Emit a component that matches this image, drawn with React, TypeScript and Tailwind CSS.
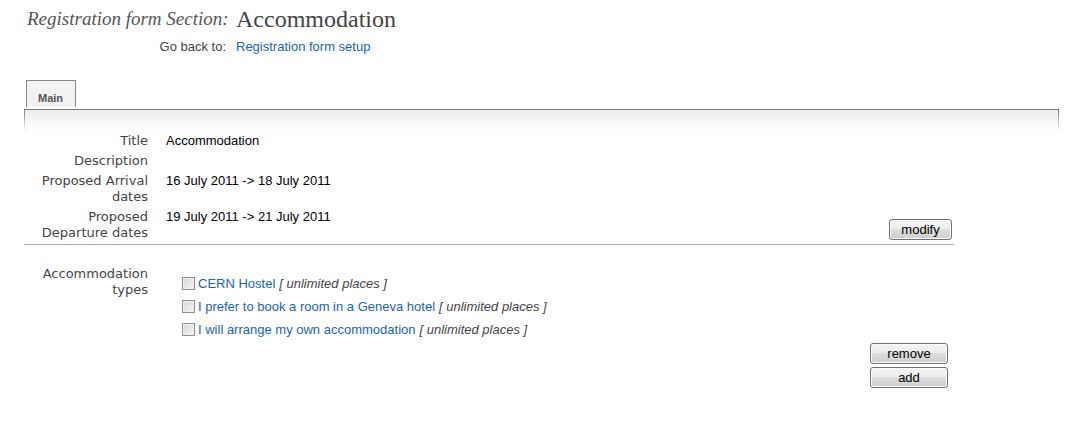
import React from "react";

const label = "w-[124px] shrink-0 pl-3 text-right font-['DejaVu_Sans',Verdana,sans-serif] text-[13px] leading-4 text-[#444]";
const value = "ml-[18px] flex-1 text-[13px] leading-4 text-black";
const btn =
    "h-[21px] rounded-[3px] border border-[#707070] bg-[linear-gradient(to_bottom,#f4f4f4_0%,#ebebeb_50%,#dddddd_50%,#cfcfcf_100%)] text-[13px] leading-[19px] text-black shadow-[inset_0_0_0_1px_#fcfcfc]";

const types = [
    "CERN Hostel",
    "I prefer to book a room in a Geneva hotel",
    "I will arrange my own accommodation",
];

function Row({ name, children, extra }: { name: React.ReactNode; children?: React.ReactNode; extra?: React.ReactNode }) {
    return (
        <div className="flex py-[2px]">
            <div className={label}>{name}</div>
            <div className={value}>{children}</div>
            {extra}
        </div>
    );
}

export default function App() {
    return (
        <div className="min-h-[421px] w-[1070px] bg-white font-['Liberation_Sans',Arial,sans-serif]">
            {/* Header */}
            <div className="grid grid-cols-[199px_auto] gap-x-[10px] gap-y-[6px] pl-[27px] pt-[5px]">
                <div className="whitespace-nowrap text-right font-['Liberation_Serif',Georgia,serif] text-[19px] italic leading-7 text-[#555]">
                    Registration form Section:
                </div>
                <div className="font-['Liberation_Serif',Georgia,serif] text-[24px] leading-7 text-[#444]">Accommodation</div>
                <div className="text-right text-[13px] leading-4 text-[#444]">Go back to:</div>
                <div className="text-[13px] leading-4">
                    <a className="text-[#1a64b0]">Registration form setup</a>
                </div>
            </div>

            {/* Tabs */}
            <div className="mt-[25px] pl-[24px]">
                <div className="relative z-10 -mb-px ml-[2px] inline-block border border-b-0 border-[#888] bg-[#f2f2f2] pb-[2px] pl-[11px] pr-[12px] pt-[11px] text-[11px] font-bold leading-[13px] text-[#555]">
                    Main
                </div>
                <div className="h-[22px] w-[1035px] bg-gradient-to-b from-[#777] to-white px-px pt-px">
                    <div className="h-full bg-gradient-to-b from-[#ececec] to-white" />
                </div>

                <div className="w-[930px]">
                    <div className="border-b border-[#aaa] pb-px">
                        <Row name="Title">Accommodation</Row>
                        <Row name="Description" />
                        <Row name={<>Proposed Arrival<br />dates</>}>16 July 2011 -&gt; 18 July 2011</Row>
                        <Row
                            name={<>Proposed<br />Departure dates</>}
                            extra={<button className={`${btn} mb-[1px] mr-[2px] w-[63px] self-end`}>modify</button>}
                        >
                            19 July 2011 -&gt; 21 July 2011
                        </Row>
                    </div>

                    <div className="mt-[19px] flex py-[2px]">
                        <div className={label}>
                            Accommodation
                            <br />
                            types
                        </div>
                        <div className="ml-[18px] flex-1 pl-4 pt-[6px]">
                            {types.map(t => (
                                <div key={t} className="flex h-[23px] items-center text-[13px]">
                                    <span className="mr-[3px] h-[13px] w-[13px] shrink-0 border border-[#8f8f8f] bg-gradient-to-br from-[#d6d6d6] to-[#f6f6f6] shadow-[inset_0_0_0_1px_#f0f0f0]" />
                                    <a className="text-[#1a64b0]">{t}</a>
                                    <span className="ml-1 italic text-[#444]">[ unlimited places ]</span>
                                </div>
                            ))}
                        </div>
                    </div>

                    <div className="flex flex-col items-end gap-[3px] pr-[6px]">
                        <button className={`${btn} w-[78px]`}>remove</button>
                        <button className={`${btn} w-[78px]`}>add</button>
                    </div>
                </div>
            </div>
        </div>
    );
}
